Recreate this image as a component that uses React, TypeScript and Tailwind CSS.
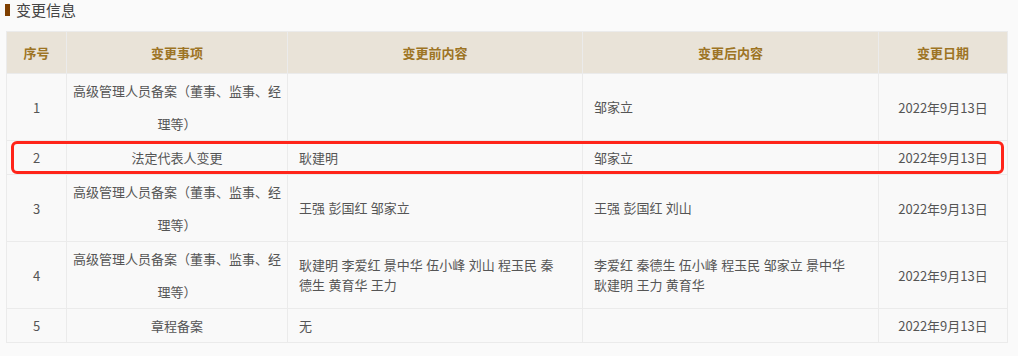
import React from "react";

interface ChangeRecord {
  no: number;
  item: string;
  before: string;
  after: string;
  date: string;
}

const records: ChangeRecord[] = [
  { no: 1, item: "高级管理人员备案（董事、监事、经理等）", before: "", after: "邹家立", date: "2022年9月13日" },
  { no: 2, item: "法定代表人变更", before: "耿建明", after: "邹家立", date: "2022年9月13日" },
  { no: 3, item: "高级管理人员备案（董事、监事、经理等）", before: "王强 彭国红 邹家立", after: "王强 彭国红 刘山", date: "2022年9月13日" },
  {
    no: 4,
    item: "高级管理人员备案（董事、监事、经理等）",
    before: "耿建明 李爱红 景中华 伍小峰 刘山 程玉民 秦德生 黄育华 王力",
    after: "李爱红 秦德生 伍小峰 程玉民 邹家立 景中华 耿建明 王力 黄育华",
    date: "2022年9月13日",
  },
  { no: 5, item: "章程备案", before: "无", after: "", date: "2022年9月13日" },
];

const headers = ["序号", "变更事项", "变更前内容", "变更后内容", "变更日期"];

export default function App() {
  return (
    <div
      className="relative w-[1018px] h-[356px] bg-[#fafafa] text-[#555] overflow-hidden"
      style={{ fontFamily: '"Noto Sans CJK SC", "Noto Sans", sans-serif' }}
    >
      <div className="flex items-center h-[20px] pl-[5px] mb-[11px]">
        <span className="w-[5px] h-[12px] bg-[#7f3f00] mr-[6px]" />
        <span className="text-[15px] leading-[20px] text-[#444]">变更信息</span>
      </div>

      <table className="ml-[6px] w-[1001px] table-fixed border-collapse text-[13px]">
        <colgroup>
          <col className="w-[60px]" />
          <col className="w-[221px]" />
          <col className="w-[295px]" />
          <col className="w-[296px]" />
          <col className="w-[129px]" />
        </colgroup>
        <thead>
          <tr className="bg-[#e9e3d8]">
            {headers.map((h) => (
              <th
                key={h}
                className="h-[42px] border border-[#ebebeb] font-bold text-[#9d7424] text-center"
              >
                {h}
              </th>
            ))}
          </tr>
        </thead>
        <tbody>
          {records.map((r) => (
            <tr key={r.no} className="bg-[#f9f9f9]">
              <td className="border border-[#ebebeb] text-center leading-[33px]">{r.no}</td>
              <td className="border border-[#ebebeb] text-center leading-[33px] px-[4px]">{r.item}</td>
              <td className="border border-[#ebebeb] pl-[11px] pr-[23px]">
                <div className="leading-[20px] [word-spacing:0.5px]">{r.before}</div>
              </td>
              <td className="border border-[#ebebeb] pl-[11px] pr-[24px]">
                <div className="leading-[20px] [word-spacing:0.5px]">{r.after}</div>
              </td>
              <td className="border border-[#ebebeb] text-center leading-[33px]">{r.date}</td>
            </tr>
          ))}
        </tbody>
      </table>

      {/* annotation box around row 2 */}
      <div className="absolute left-[11px] top-[141px] w-[993px] h-[33px] border-[3px] border-[#ff2419] rounded-[6px] pointer-events-none" />
    </div>
  );
}
